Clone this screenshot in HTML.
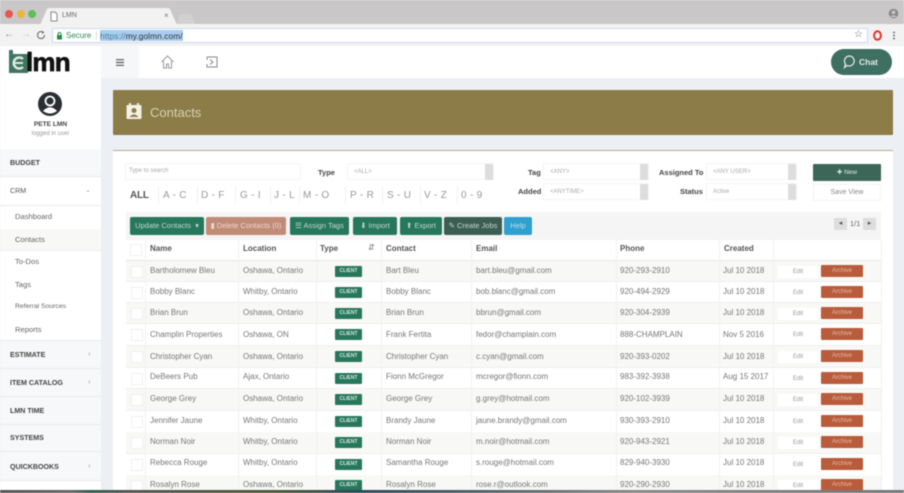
<!DOCTYPE html>
<html><head><meta charset="utf-8"><title>LMN</title>
<style>
*{box-sizing:border-box}
html,body{margin:0;padding:0;width:904px;height:493px;overflow:hidden;background:#ecf0f4}
body{font-family:"Liberation Sans",sans-serif;color:#555;position:relative}
#w{position:absolute;left:0;top:0;width:904px;height:493px;overflow:hidden;filter:blur(.6px)}
#w div,#w span.a,#w svg{position:absolute}
.t{white-space:nowrap;font-size:8px;color:#666;line-height:12px}
.b{font-weight:bold;color:#444}
.side{left:0;width:101px;background:#f7f8f9;border-bottom:1px solid #e8eaec;font-size:7.1px;font-weight:bold;color:#444;padding-left:10px;white-space:nowrap}
.sub{left:0;width:101px;background:#fff;font-size:7.6px;color:#666;padding-left:15px;white-space:nowrap}
.btn{top:217px;height:18px;border-radius:2px;color:#c3d8ce;font-size:7.5px;text-align:center;line-height:18px;white-space:nowrap;background:#27775c}
.sel{background:#fff;border:1px solid #f4f4f4;height:17px;font-size:6px;color:#aaa;line-height:16px;padding-left:6px;white-space:nowrap}
.arr{right:0;top:0;width:8px;height:16px;background:#ddd;border-radius:1px}
.lab{font-size:7.5px;font-weight:bold;color:#444;white-space:nowrap;line-height:12px}
.al{top:189px;font-size:10px;color:#999;white-space:nowrap;line-height:14px;letter-spacing:.3px}
.alsep{top:186px;width:1px;height:18px;background:#f2f2f2}
.row{left:126px;width:755px;height:22px;border-bottom:1px solid #eee}
.row.o{background:#f8f8f6}
.row.w{background:#fff}
.c{top:5px;font-size:8px;color:#777;white-space:nowrap;line-height:12px}
.cb{left:5px;top:5px;width:12px;height:12px;background:#fff;border:1px solid #f0f0f0}
.badge{left:209px;top:5px;width:27px;height:11px;background:#27775c;border-radius:1px;color:#d5e8e0;font-size:5px;font-weight:bold;text-align:center;line-height:11px}
.ed{left:652px;top:5px;width:40px;height:12px;background:#fff;font-size:6px;color:#999;text-align:center;line-height:12px}
.ar{left:695px;top:4px;width:42px;height:12px;background:#b85c3c;border-radius:1px;color:#e6bba8;font-size:6px;text-align:center;line-height:12px}
.v{top:240px;width:1px;height:253px;background:#f1f1f1}
.h{top:243px;font-size:8px;font-weight:bold;color:#555;white-space:nowrap;line-height:12px}
</style></head><body><div id="w">

<!-- browser chrome -->
<div style="left:0;top:0;width:904px;height:24px;background:#c9c7c8"></div>
<div style="left:5px;top:10px;width:8px;height:8px;border-radius:50%;background:#e8564e"></div>
<div style="left:17px;top:10px;width:8px;height:8px;border-radius:50%;background:#ecb53c"></div>
<div style="left:28px;top:10px;width:8px;height:8px;border-radius:50%;background:#5dbf55"></div>
<svg style="left:40px;top:8px" width="140" height="17"><path d="M0 17 L7 1 Q8 0 10 0 L127 0 Q129 0 130 1 L137 17Z" fill="#f2f2f2"/></svg>
<svg style="left:177px;top:13px" width="20" height="11"><path d="M0 11 L3 1 L14 1 L18 11Z" fill="#d2d0d1"/></svg>
<svg style="left:50px;top:11px" width="8" height="11"><path d="M1 1H5L7 3V10H1Z" fill="#fff" stroke="#888" stroke-width="1"/></svg>
<div class="t" style="left:62px;top:10px;font-size:7px;color:#666">LMN</div>
<div class="t" style="left:164px;top:10px;font-size:8px;color:#777">×</div>
<svg style="left:888px;top:8px" width="11" height="11"><circle cx="5.5" cy="5.5" r="4.8" fill="#8a8a8a"/><circle cx="5.5" cy="4.3" r="1.8" fill="#c9c7c8"/><path d="M2 9Q5.500 5.500 9 9" fill="#c9c7c8"/></svg>

<div style="left:0;top:24px;width:904px;height:22px;background:#f2f2f2"></div>
<div class="t" style="left:4px;top:29px;font-size:10px;color:#888">←</div>
<div class="t" style="left:21px;top:29px;font-size:10px;color:#ccc">→</div>
<svg style="left:36px;top:30px" width="10" height="10"><path d="M8.500 5A3.500 3.500 0 1 1 7 2.200" fill="none" stroke="#777" stroke-width="1.200"/><path d="M6 0.500L8.500 2.500L6 4Z" fill="#777"/></svg>
<div style="left:52px;top:28px;width:816px;height:15px;background:#fff;border:1px solid #c9daf0;border-radius:1px"></div>
<svg style="left:56px;top:32px" width="7" height="8"><rect x="1" y="3" width="5" height="4.500" fill="#2b8a4b"/><path d="M2 3.500V2A1.500 1.500 0 0 1 5 2V3.500" fill="none" stroke="#2b8a4b"/></svg>
<div class="t" style="left:66px;top:30px;font-size:8px;color:#2f8a55">Secure</div>
<div style="left:96px;top:31px;width:1px;height:9px;background:#ddd"></div>
<div style="left:100px;top:30px;width:83px;height:11px;background:#a9cdf0"></div>
<div class="t" style="left:100px;top:30px;font-size:8.3px;color:#333;letter-spacing:.1px"><span style="color:#4f7f9a">https://</span>my.golmn.com/</div>
<div class="t" style="left:854px;top:29px;font-size:10px;color:#666">☆</div>
<svg style="left:873px;top:30px" width="9" height="11"><ellipse cx="4.500" cy="5.500" rx="3.400" ry="4.200" fill="none" stroke="#e0382c" stroke-width="2"/></svg>
<svg style="left:892px;top:31px" width="4" height="10"><circle cx="2" cy="1.500" r="1" fill="#777"/><circle cx="2" cy="4.500" r="1" fill="#777"/><circle cx="2" cy="7.500" r="1" fill="#777"/></svg>

<!-- app top bar -->
<div style="left:0;top:46px;width:904px;height:32px;background:#fff"></div>
<div style="left:101px;top:46px;width:38px;height:32px;background:#f6f7f8"></div>
<svg style="left:8px;top:49px" width="21" height="24"><path d="M1 1V24H20V5H5V1Z" fill="#3f7561"/><path d="M15 10A5.500 5.500 0 1 0 15 18" fill="none" stroke="#dfe8e4" stroke-width="2.500"/><path d="M7 14H15" stroke="#dfe8e4" stroke-width="2"/></svg>
<div class="t" style="left:26px;top:47px;font-size:26px;line-height:30px;font-weight:bold;color:#111;letter-spacing:-.8px;-webkit-text-stroke:.7px #111">lmn</div>
<svg style="left:116px;top:59px" width="8" height="7"><path d="M0 .7H8M0 3.500H8M0 6.300H8" stroke="#555" stroke-width="1.200"/></svg>
<svg style="left:161px;top:55px" width="13" height="14"><path d="M.5 7L6.500 1L12.500 7M2.500 6V13H5.500V9H7.500V13H10.500V6" fill="none" stroke="#999" stroke-width="1"/></svg>
<svg style="left:206px;top:56px" width="12" height="12"><path d="M1 1H11V11H1V8M1 4V1" fill="none" stroke="#888" stroke-width="1"/><path d="M4 3.500L7 6L4 8.500" fill="none" stroke="#888" stroke-width="1"/></svg>
<div style="left:831px;top:49px;width:61px;height:26px;border-radius:13px;background:#3f6f61"></div>
<svg style="left:843px;top:55px" width="13" height="14"><path d="M6.500 1A5 5 0 1 1 4 10.500L1.500 12.500L2.500 9A5 5 0 0 1 6.500 1Z" fill="none" stroke="#e8efec" stroke-width="1.200"/></svg>
<div class="t" style="left:859px;top:56px;font-size:8.5px;font-weight:bold;color:#e3ebe8">Chat</div>

<!-- sidebar -->
<div style="left:0;top:78px;width:101px;height:415px;background:#fff"></div>
<svg style="left:38px;top:92px" width="24" height="24"><circle cx="12" cy="12" r="12" fill="#2a2e33"/><circle cx="12" cy="9" r="4.500" fill="none" stroke="#fff" stroke-width="1.800"/><path d="M5 19Q12 11.500 19 19Q12 24 5 19Z" fill="#fff"/></svg>
<div class="t" style="left:0;top:119px;width:101px;text-align:center;font-size:6.6px;font-weight:bold;color:#444">PETE LMN</div>
<div class="t" style="left:0;top:128px;width:101px;text-align:center;font-size:6px;color:#999">logged in user</div>

<div class="side" style="top:149px;height:28px;line-height:28px">BUDGET</div>
<div class="side" style="top:177px;height:29px;line-height:29px;background:#fff;font-weight:normal;color:#555">CRM</div>
<div class="t" style="left:85px;top:185px;font-size:7px;color:#999">⌄</div>
<div class="sub" style="top:206px;height:23px;line-height:22px">Dashboard</div>
<div class="sub" style="top:229px;height:22px;line-height:22px;background:#f8f8f6;border-bottom:1px solid #eee">Contacts</div>
<div class="sub" style="top:251px;height:22px;line-height:21px">To-Dos</div>
<div class="sub" style="top:273px;height:23px;line-height:23px">Tags</div>
<div class="sub" style="top:296px;height:22px;line-height:21px;font-size:6.8px">Referral Sources</div>
<div class="sub" style="top:318px;height:23px;line-height:23px;border-bottom:1px solid #e8eaec">Reports</div>
<div class="side" style="top:341px;height:28px;line-height:28px">ESTIMATE</div>
<div class="side" style="top:369px;height:28px;line-height:28px">ITEM CATALOG</div>
<div class="side" style="top:397px;height:28px;line-height:29px">LMN TIME</div>
<div class="side" style="top:425px;height:27px;line-height:27px">SYSTEMS</div>
<div class="side" style="top:452px;height:29px;line-height:30px">QUICKBOOKS</div>
<div class="t" style="left:88px;top:348px;font-size:8px;color:#aaa">‹</div>
<div class="t" style="left:88px;top:376px;font-size:8px;color:#aaa">‹</div>
<div class="t" style="left:88px;top:460px;font-size:8px;color:#aaa">‹</div>

<!-- banner -->
<div style="left:113px;top:90px;width:780px;height:45px;background:#8c7c48;border-radius:1px"></div>
<svg style="left:126px;top:103px" width="16" height="17"><rect x="0.500" y="2" width="15" height="14" rx="1" fill="#f3f0e5"/><rect x="3" y="0" width="2" height="4" fill="#f3f0e5"/><rect x="11" y="0" width="2" height="4" fill="#f3f0e5"/><circle cx="8" cy="7.500" r="2.500" fill="#8c7c48"/><path d="M3.500 14Q8 9 12.500 14Z" fill="#8c7c48"/></svg>
<div class="t" style="left:150px;top:105px;font-size:13px;line-height:16px;color:#d8d1b4">Contacts</div>

<!-- card -->
<div style="left:113px;top:150px;width:780px;height:343px;background:#fff;border-top:1px solid #b8aa80"></div>

<div class="sel" style="left:125px;top:163px;width:176px;color:#aaa;padding-left:3px;line-height:15px">Type to search</div>
<div class="lab" style="left:318px;top:167px">Type</div>
<div class="sel" style="left:347px;top:163px;width:147px"><div>&lt;ALL&gt;</div><div class="arr"></div></div>
<div class="lab" style="left:528px;top:167px">Tag</div>
<div class="sel" style="left:543px;top:163px;width:106px">&lt;ANY&gt;<div class="arr"></div></div>
<div class="lab" style="left:518px;top:186px">Added</div>
<div class="sel" style="left:543px;top:183px;width:106px">&lt;ANYTIME&gt;<div class="arr"></div></div>
<div class="lab" style="left:659px;top:167px">Assigned To</div>
<div class="sel" style="left:706px;top:163px;width:91px">&lt;ANY USER&gt;<div class="arr"></div></div>
<div class="lab" style="left:680px;top:186px">Status</div>
<div class="sel" style="left:706px;top:183px;width:91px">Active<div class="arr"></div></div>
<div style="left:813px;top:164px;width:68px;height:17px;background:#3c6657;border-radius:1px;color:#dfe8e4;font-size:6.500px;text-align:center;line-height:17px">✚ New</div>
<div style="left:813px;top:184px;width:68px;height:17px;background:#fff;border:1px solid #f3f3f3;color:#888;font-size:7px;text-align:center;line-height:16px">Save View</div>

<div class="al" style="left:130px;font-weight:bold;color:#555;letter-spacing:-.2px">ALL</div>
<div class="al" style="left:163px">A - C</div><div class="alsep" style="left:158px"></div>
<div class="al" style="left:201px">D - F</div><div class="alsep" style="left:197px"></div>
<div class="al" style="left:240px">G - I</div><div class="alsep" style="left:235px"></div>
<div class="al" style="left:274px">J - L</div><div class="alsep" style="left:270px"></div>
<div class="al" style="left:303px">M - O</div><div class="alsep" style="left:299px"></div>
<div class="al" style="left:350px">P - R</div><div class="alsep" style="left:345px"></div>
<div class="al" style="left:387px">S - U</div><div class="alsep" style="left:382px"></div>
<div class="al" style="left:424px">V - Z</div><div class="alsep" style="left:420px"></div>
<div class="al" style="left:461px">0 - 9</div><div class="alsep" style="left:457px"></div>

<!-- table toolbar -->
<div style="left:126px;top:212px;width:755px;height:28px;background:#f5f5f5"></div>
<div class="btn" style="left:130px;width:74px">Update Contacts &nbsp;▾</div>
<div class="btn" style="left:206px;width:80px;background:#c08c78;color:#eed8ce">▮ Delete Contacts (0)</div>
<div class="btn" style="left:290px;width:59px">☰ Assign Tags</div>
<div class="btn" style="left:353px;width:44px">⬇ Import</div>
<div class="btn" style="left:400px;width:42px">⬆ Export</div>
<div class="btn" style="left:444px;width:58px;background:#3c5e52">✎ Create Jobs</div>
<div class="btn" style="left:504px;width:28px;background:#2fa0d0;color:#b7e0f0">Help</div>
<div style="left:834px;top:218px;width:13px;height:12px;background:#ddd;font-size:7px;text-align:center;line-height:12px;color:#555">◂</div>
<div class="t" style="left:850px;top:218px;font-size:7.500px">1/1</div>
<div style="left:863px;top:218px;width:13px;height:12px;background:#ddd;font-size:7px;text-align:center;line-height:12px;color:#555">▸</div>

<!-- header -->
<div style="left:126px;top:240px;width:755px;height:21px;background:#fff;border-bottom:1px solid #e6e6e6"></div>
<div class="cb" style="left:130px;top:244px"></div>
<div class="h" style="left:150px">Name</div>
<div class="h" style="left:243px">Location</div>
<div class="h" style="left:320px">Type</div>
<div class="t" style="left:368px;top:242px;font-size:8px;color:#777">⇵</div>
<div class="h" style="left:386px">Contact</div>
<div class="h" style="left:476px">Email</div>
<div class="h" style="left:620px">Phone</div>
<div class="h" style="left:724px">Created</div>

<!-- rows -->
<div class="row o" style="top:261px;height:21px"><div class="cb"></div><div class="c" style="left:24px;top:4px">Bartholomew Bleu</div><div class="c" style="left:117px;top:4px">Oshawa, Ontario</div><div class="badge">CLIENT</div><div class="c" style="left:260px;top:4px">Bart Bleu</div><div class="c" style="left:350px;top:4px">bart.bleu@gmail.com</div><div class="c" style="left:494px;top:4px">920-293-2910</div><div class="c" style="left:597px;top:4px">Jul 10 2018</div><div class="ed">Edit</div><div class="ar">Archive</div></div>
<div class="row w" style="top:282px;height:21px"><div class="cb"></div><div class="c" style="left:24px;top:4px">Bobby Blanc</div><div class="c" style="left:117px;top:4px">Whitby, Ontario</div><div class="badge">CLIENT</div><div class="c" style="left:260px;top:4px">Bobby Blanc</div><div class="c" style="left:350px;top:4px">bob.blanc@gmail.com</div><div class="c" style="left:494px;top:4px">920-494-2929</div><div class="c" style="left:597px;top:4px">Jul 10 2018</div><div class="ed">Edit</div><div class="ar">Archive</div></div>
<div class="row o" style="top:303px;height:21px"><div class="cb"></div><div class="c" style="left:24px;top:4px">Brian Brun</div><div class="c" style="left:117px;top:4px">Oshawa, Ontario</div><div class="badge">CLIENT</div><div class="c" style="left:260px;top:4px">Brian Brun</div><div class="c" style="left:350px;top:4px">bbrun@gmail.com</div><div class="c" style="left:494px;top:4px">920-304-2939</div><div class="c" style="left:597px;top:4px">Jul 10 2018</div><div class="ed">Edit</div><div class="ar">Archive</div></div>
<div class="row w" style="top:324px"><div class="cb"></div><div class="c" style="left:24px">Champlin Properties</div><div class="c" style="left:117px">Oshawa, ON</div><div class="badge">CLIENT</div><div class="c" style="left:260px">Frank Fertita</div><div class="c" style="left:350px">fedor@champlain.com</div><div class="c" style="left:494px">888-CHAMPLAIN</div><div class="c" style="left:597px">Nov 5 2016</div><div class="ed">Edit</div><div class="ar">Archive</div></div>
<div class="row o" style="top:346px"><div class="cb"></div><div class="c" style="left:24px">Christopher Cyan</div><div class="c" style="left:117px">Oshawa, Ontario</div><div class="badge">CLIENT</div><div class="c" style="left:260px">Christopher Cyan</div><div class="c" style="left:350px">c.cyan@gmail.com</div><div class="c" style="left:494px">920-393-0202</div><div class="c" style="left:597px">Jul 10 2018</div><div class="ed">Edit</div><div class="ar">Archive</div></div>
<div class="row w" style="top:368px;height:21px"><div class="cb"></div><div class="c" style="left:24px;top:3px">DeBeers Pub</div><div class="c" style="left:117px;top:3px">Ajax, Ontario</div><div class="badge">CLIENT</div><div class="c" style="left:260px;top:3px">Fionn McGregor</div><div class="c" style="left:350px;top:3px">mcregor@fionn.com</div><div class="c" style="left:494px;top:3px">983-392-3938</div><div class="c" style="left:597px;top:3px">Aug 15 2017</div><div class="ed">Edit</div><div class="ar">Archive</div></div>
<div class="row o" style="top:389px"><div class="cb"></div><div class="c" style="left:24px;top:4px">George Grey</div><div class="c" style="left:117px;top:4px">Oshawa, Ontario</div><div class="badge">CLIENT</div><div class="c" style="left:260px;top:4px">George Grey</div><div class="c" style="left:350px;top:4px">g.grey@hotmail.com</div><div class="c" style="left:494px;top:4px">920-102-3939</div><div class="c" style="left:597px;top:4px">Jul 10 2018</div><div class="ed">Edit</div><div class="ar">Archive</div></div>
<div class="row w" style="top:411px"><div class="cb"></div><div class="c" style="left:24px;top:4px">Jennifer Jaune</div><div class="c" style="left:117px;top:4px">Whitby, Ontario</div><div class="badge">CLIENT</div><div class="c" style="left:260px;top:4px">Brandy Jaune</div><div class="c" style="left:350px;top:4px">jaune.brandy@gmail.com</div><div class="c" style="left:494px;top:4px">930-393-2910</div><div class="c" style="left:597px;top:4px">Jul 10 2018</div><div class="ed">Edit</div><div class="ar">Archive</div></div>
<div class="row o" style="top:432px"><div class="cb"></div><div class="c" style="left:24px;top:4px">Norman Noir</div><div class="c" style="left:117px;top:4px">Whitby, Ontario</div><div class="badge">CLIENT</div><div class="c" style="left:260px;top:4px">Norman Noir</div><div class="c" style="left:350px;top:4px">m.noir@hotmail.com</div><div class="c" style="left:494px;top:4px">920-943-2921</div><div class="c" style="left:597px;top:4px">Jul 10 2018</div><div class="ed">Edit</div><div class="ar">Archive</div></div>
<div class="row w" style="top:454px"><div class="cb"></div><div class="c" style="left:24px;top:3px">Rebecca Rouge</div><div class="c" style="left:117px;top:3px">Whitby, Ontario</div><div class="badge">CLIENT</div><div class="c" style="left:260px;top:3px">Samantha Rouge</div><div class="c" style="left:350px;top:3px">s.rouge@hotmail.com</div><div class="c" style="left:494px;top:3px">829-940-3930</div><div class="c" style="left:597px;top:3px">Jul 10 2018</div><div class="ed">Edit</div><div class="ar">Archive</div></div>
<div class="row o" style="top:475px"><div class="cb"></div><div class="c" style="left:24px;top:4px">Rosalyn Rose</div><div class="c" style="left:117px;top:4px">Oshawa, Ontario</div><div class="badge">CLIENT</div><div class="c" style="left:260px;top:4px">Rosalyn Rose</div><div class="c" style="left:350px;top:4px">rose.r@outlook.com</div><div class="c" style="left:494px;top:4px">920-290-2930</div><div class="c" style="left:597px;top:4px">Jul 10 2018</div><div class="ed">Edit</div><div class="ar">Archive</div></div>

<div class="v" style="left:145px"></div>
<div class="v" style="left:238px"></div>
<div class="v" style="left:316px"></div>
<div class="v" style="left:381px"></div>
<div class="v" style="left:471px"></div>
<div class="v" style="left:616px"></div>
<div class="v" style="left:719px"></div>
<div class="v" style="left:773px"></div>
<div class="v" style="left:881px"></div>

<!-- bottom desktop strip -->
<div style="left:0;top:490px;width:904px;height:3px;background:linear-gradient(90deg,#555 0,#666 8%,#2f5f4c 10%,#555 14%,#4d5a33 30%,#2a4a5c 40%,#566 55%,#888 70%,#777 100%)"></div>

</div></body></html>
